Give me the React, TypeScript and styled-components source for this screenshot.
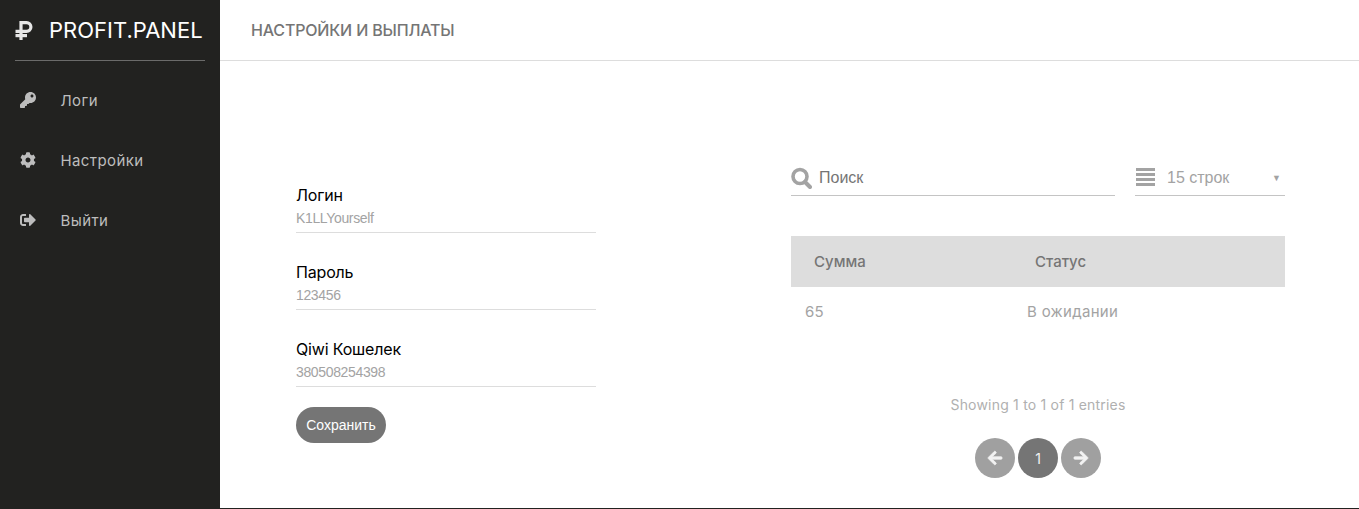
import styled, { createGlobalStyle } from 'styled-components';
import { FaArrowLeft, FaArrowRight, FaCog, FaKey, FaSignOutAlt } from 'react-icons/fa';
import type { ReactNode } from 'react';

const GlobalStyle = createGlobalStyle`
    html, body {
        margin: 0;
        padding: 0;
        background: #fff;
    }
`;

const heading = `"Inter", "Noto Sans", sans-serif`;
const plain = `"Liberation Sans", Arial, sans-serif`;

const Page = styled.div`
    display: flex;
    width: 1359px;
    height: 509px;
    overflow: hidden;
`;

const Sidebar = styled.aside`
    width: 220px;
    flex-shrink: 0;
    background: #222220;
    display: flex;
    flex-direction: column;
`;

const Brand = styled.div`
    height: 60px;
    margin: 0 15px 9px;
    display: flex;
    align-items: center;
    gap: 16px;
    border-bottom: 1px solid #6b6b6a;
    box-sizing: content-box;
    color: #fff;
    font-family: ${heading};
    font-size: 22px;
    white-space: nowrap;
`;

const NavItem = styled.a`
    height: 60px;
    display: flex;
    align-items: center;
    padding-left: 20px;
    color: #bdbdbd;
    font-family: ${heading};
    font-size: 15px;
    letter-spacing: 0.4px;

    svg {
        font-size: 16px;
        width: 16px;
        margin-right: 24.5px;
    }
`;

const Main = styled.main`
    flex: 1;
    display: flex;
    flex-direction: column;
    border-bottom: 1px solid #222220;
`;

const Header = styled.header`
    height: 60px;
    flex-shrink: 0;
    display: flex;
    align-items: center;
    padding-left: 31px;
    border-bottom: 1px solid #dddddd;
    color: #757575;
    font-family: ${heading};
    font-size: 16px;
    font-weight: 500;
    letter-spacing: -0.17px;
    text-transform: uppercase;
`;

const Content = styled.div`
    display: grid;
    grid-template-columns: 495px 494px;
    padding: 99px 74px 0 76px;
`;

const Form = styled.form`
    width: 300px;
    display: flex;
    flex-direction: column;
    padding-top: 26px;
`;

const Field = styled.div`
    height: 77px;
    box-sizing: border-box;

    &:last-of-type {
        height: 47px;
    }
`;

const Label = styled.div`
    color: #000;
    font-family: ${heading};
    font-size: 16px;
    letter-spacing: -0.17px;
    line-height: 18px;
`;

const Value = styled.div`
    margin-top: 4px;
    height: 25px;
    line-height: 21px;
    box-sizing: border-box;
    border-bottom: 1px solid #dddddd;
    color: #a3a3a3;
    font-family: ${plain};
    font-size: 14px;
    letter-spacing: -0.35px;
`;

const SaveButton = styled.button`
    width: 90px;
    height: 36px;
    margin-top: 20px;
    padding: 0;
    border: 0;
    border-radius: 18px;
    background: #757575;
    color: #fff;
    font-family: ${plain};
    font-size: 14px;
`;

const Toolbar = styled.div`
    display: flex;
    gap: 20px;
    height: 36px;
`;

const SearchBox = styled.div`
    width: 324px;
    display: flex;
    align-items: center;
    box-sizing: border-box;
    border-bottom: 1px solid #c4c4c4;
    color: #757575;
    font-family: ${plain};
    font-size: 16px;

    svg {
        margin-right: 7px;
    }
`;

const RowsSelect = styled.div`
    width: 150px;
    display: flex;
    align-items: center;
    box-sizing: border-box;
    border-bottom: 1px solid #c4c4c4;
    color: #a3a3a3;
    font-family: ${plain};
    font-size: 16px;

    svg {
        margin-left: 1px;
        margin-right: 12px;
    }
`;

const Caret = styled.span`
    margin-left: auto;
    margin-right: 4px;
    font-size: 9px;
`;

const Table = styled.div`
    margin-top: 40px;
`;

const TableHead = styled.div`
    display: grid;
    grid-template-columns: 221px 1fr;
    align-items: center;
    height: 51px;
    padding-left: 23px;
    background: #dddddd;
    color: #757575;
    font-family: ${heading};
    font-size: 15px;
    font-weight: 500;
`;

const TableRow = styled.div`
    display: grid;
    grid-template-columns: 222px 1fr;
    align-items: center;
    height: 49px;
    padding-left: 14px;
    color: #a3a3a3;
    font-family: ${heading};
    font-size: 15px;
    letter-spacing: 0.3px;
`;

const Showing = styled.div`
    margin-top: 57px;
    text-align: center;
    color: #b0b0b0;
    font-family: ${heading};
    font-size: 14px;
    letter-spacing: 0.2px;
    line-height: 24px;
`;

const Pager = styled.div`
    margin-top: 21px;
    display: flex;
    justify-content: center;
    gap: 3px;
`;

const PageCircle = styled.span<{ $active?: boolean }>`
    width: 40px;
    height: 40px;
    border-radius: 50%;
    display: flex;
    align-items: center;
    justify-content: center;
    background: ${(p) => (p.$active ? '#757575' : '#a0a0a0')};
    color: #f2f2f2;
    font-family: ${heading};
    font-size: 14px;

    svg {
        font-size: 16px;
        stroke: currentColor;
        stroke-width: 24px;
    }
`;

function RubleIcon() {
    return (
        <svg width="18" height="19" viewBox="0 0 18 19" fill="none" stroke="#e6e6e6" strokeWidth="3.2">
            <path d="M6 19V1.6H11.5a4.4 4.4 0 0 1 0 8.8H0.5" />
            <path d="M0.5 14.6H12" />
        </svg>
    );
}

function SearchIcon() {
    return (
        <svg width="21" height="22" viewBox="0 0 21 22" fill="none" stroke="#a3a3a3">
            <circle cx="9" cy="9.5" r="7" strokeWidth="3.6" />
            <line x1="14" y1="15" x2="19" y2="20" strokeWidth="4" strokeLinecap="round" />
        </svg>
    );
}

function ListIcon() {
    return (
        <svg width="19" height="19" viewBox="0 0 19 19" fill="#a3a3a3">
            <rect x="0" y="0" width="19" height="3" />
            <rect x="0" y="5" width="19" height="3" />
            <rect x="0" y="10" width="19" height="3" />
            <rect x="0" y="15" width="19" height="3" />
        </svg>
    );
}

function SideLink(props: { icon: ReactNode; label: string }) {
    return (
        <NavItem>
            {props.icon}
            {props.label}
        </NavItem>
    );
}

function FormField(props: { label: string; value: string }) {
    return (
        <Field>
            <Label>{props.label}</Label>
            <Value>{props.value}</Value>
        </Field>
    );
}

export default function App() {
    return (
        <Page>
            <GlobalStyle />
            <Sidebar>
                <Brand>
                    <RubleIcon />
                    PROFIT.PANEL
                </Brand>
                <SideLink icon={<FaKey />} label="Логи" />
                <SideLink icon={<FaCog />} label="Настройки" />
                <SideLink icon={<FaSignOutAlt />} label="Выйти" />
            </Sidebar>
            <Main>
                <Header>Настройки и выплаты</Header>
                <Content>
                    <Form>
                        <FormField label="Логин" value="K1LLYourself" />
                        <FormField label="Пароль" value="123456" />
                        <FormField label="Qiwi Кошелек" value="380508254398" />
                        <SaveButton type="button">Сохранить</SaveButton>
                    </Form>
                    <div>
                        <Toolbar>
                            <SearchBox>
                                <SearchIcon />
                                Поиск
                            </SearchBox>
                            <RowsSelect>
                                <ListIcon />
                                15 строк
                                <Caret>▼</Caret>
                            </RowsSelect>
                        </Toolbar>
                        <Table>
                            <TableHead>
                                <span>Сумма</span>
                                <span>Статус</span>
                            </TableHead>
                            <TableRow>
                                <span>65</span>
                                <span>В ожидании</span>
                            </TableRow>
                        </Table>
                        <Showing>Showing 1 to 1 of 1 entries</Showing>
                        <Pager>
                            <PageCircle><FaArrowLeft /></PageCircle>
                            <PageCircle $active>1</PageCircle>
                            <PageCircle><FaArrowRight /></PageCircle>
                        </Pager>
                    </div>
                </Content>
            </Main>
        </Page>
    );
}
